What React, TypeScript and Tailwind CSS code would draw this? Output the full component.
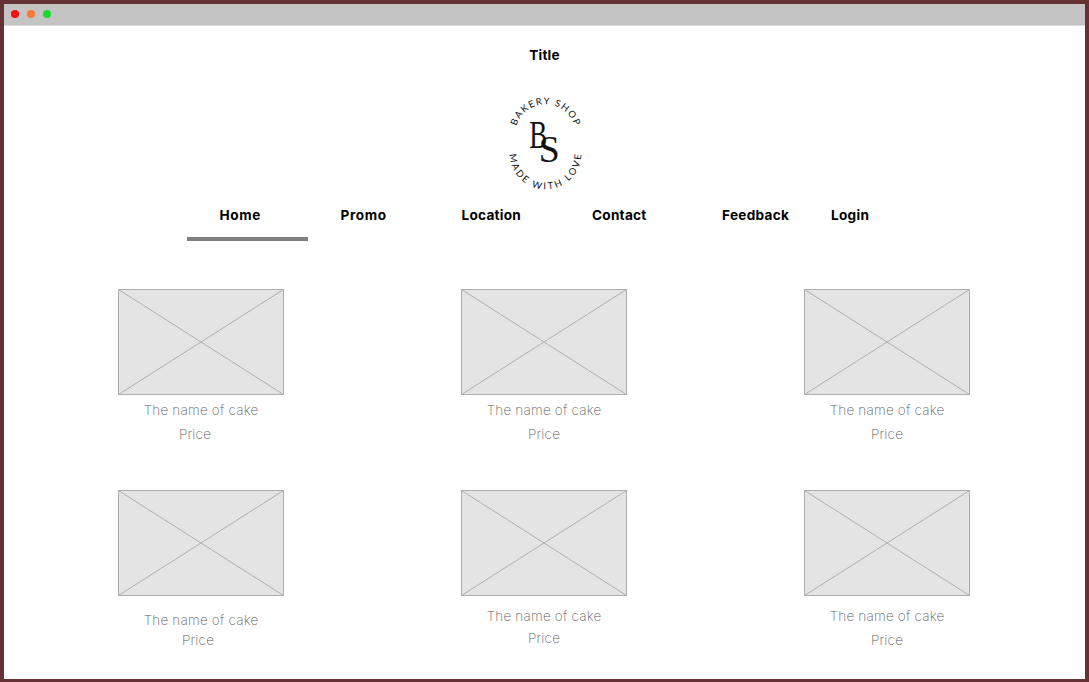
import React from "react";

const NAV = [
  { label: "Home", cell: "w-[121px] pl-[32.5px]", type: "tracking-[0.6px]" },
  { label: "Promo", cell: "w-[121px] pl-[32.5px]", type: "tracking-[0.65px]" },
  { label: "Location", cell: "w-[130px] pl-[32.5px]", type: "tracking-[0.25px]" },
  { label: "Contact", cell: "w-[131px] pl-[33px]", type: "tracking-[0.25px]" },
  { label: "Feedback", cell: "w-[109px] pl-[32px]", type: "tracking-[0.3px]" },
  { label: "Login", cell: "w-[90px] pl-[32px]", type: "tracking-[0.3px]" },
];

const CAKES = [
  { name: "pt-[5px]", price: "pt-[4px] pr-[12px]" },
  { name: "pt-[5px]", price: "pt-[4px]" },
  { name: "pt-[5px]", price: "pt-[4px]" },
  { name: "pt-[14px]", price: "pr-[6px]" },
  { name: "pt-[10px]", price: "pt-[2px]" },
  { name: "pt-[10px]", price: "pt-[4px]" },
];

function Logo() {
  return (
    <svg width={80} height={100} viewBox="505 94 80 100" className="block" aria-label="Bakery Shop">
      <defs>
        <path id="upper" d="M515.1 134.7 A30.4 30.4 0 0 1 575.9 134.7" />
        <path id="lower" d="M509.8 153.7 A35.7 35.7 0 0 0 581.2 153.7" />
      </defs>
      <g className="fill-[#111]">
        <text className="font-['Lato',sans-serif] text-[9.4px]">
          <textPath href="#upper" startOffset={8.8} textLength={77.5} lengthAdjust="spacing">
            BAKERY SHOP
          </textPath>
        </text>
        <text className="font-['Lato',sans-serif] text-[9.4px]">
          <textPath href="#lower" startOffset={0.5} textLength={110.5} lengthAdjust="spacing">
            MADE WITH LOVE
          </textPath>
        </text>
        <g className="font-['Liberation_Serif',serif]">
          <text x={529.3} y={148.3} textLength={18} lengthAdjust="spacingAndGlyphs" className="text-[40px]">
            B
          </text>
          <text x={538.8} y={161.5} textLength={21} lengthAdjust="spacingAndGlyphs" className="text-[38.5px]">
            S
          </text>
        </g>
      </g>
    </svg>
  );
}

function Placeholder() {
  return (
    <svg width={166} height={106} className="block">
      <rect x={0.5} y={0.5} width={165} height={105} fill="#e4e4e4" stroke="#aeaeae" />
      <path d="M0.5 0.5 L165.5 105.5 M165.5 0.5 L0.5 105.5" stroke="#aeaeae" fill="none" />
    </svg>
  );
}

export default function App() {
  return (
    <div className="flex h-[682px] w-[1089px] flex-col overflow-hidden border-x-4 border-t-4 border-b-[3px] border-[#643232] bg-white font-['Inter',sans-serif]">
      <header className="flex h-[22px] shrink-0 items-center gap-[8px] border-b border-[#dcdcdc] bg-[#c4c4c4] pb-px pl-[6.5px]">
        <span className="h-[8px] w-[8px] rounded-full bg-[#ff0a0a]" />
        <span className="h-[8px] w-[8px] rounded-full bg-[#f67a30]" />
        <span className="h-[8px] w-[8px] rounded-full bg-[#14dc2c]" />
      </header>
      <h1 className="flex h-[39px] justify-center pt-[19px] text-[13.6px] leading-5 font-bold tracking-[0.15px] text-black">
        Title
      </h1>
      <div className="flex justify-center pt-[29px]">
        <Logo />
      </div>
      <nav className="flex pt-[11px] pl-[183px] text-[13.6px] leading-5 font-bold text-black">
        {NAV.map((item, i) => (
          <a
            key={item.label}
            className={`${item.cell} ${item.type} h-[36px] ${i === 0 ? "border-b-4 border-[#808080]" : ""}`}
          >
            {item.label}
          </a>
        ))}
      </nav>
      <main className="grid auto-rows-[201px] grid-cols-[166px_166px_166px] gap-x-[177px] pt-[48px] pl-[114px] text-[13.5px] leading-5 font-extralight text-[#606060]">
        {CAKES.map((cake, i) => (
          <article key={i} className="flex flex-col items-center">
            <Placeholder />
            <p className={`${cake.name} tracking-[0.2px]`}>The name of cake</p>
            <p className={`${cake.price} tracking-[0.2px]`}>Price</p>
          </article>
        ))}
      </main>
    </div>
  );
}
